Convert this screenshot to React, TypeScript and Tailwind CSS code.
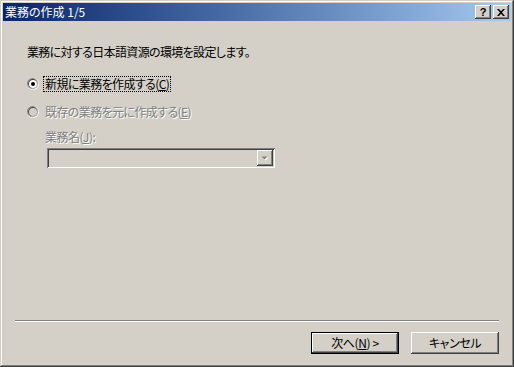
import React from "react";

const font = "font-['Noto_Sans_CJK_JP','Liberation_Sans',sans-serif] [font-feature-settings:'palt']";

function Radio({ checked, disabled }: { checked?: boolean; disabled?: boolean }) {
  return (
    <svg width="12" height="12" viewBox="0 0 12 12" className="shrink-0">
      <circle cx="6" cy="6" r="6" fill="#ffffff" />
      <circle cx="5.6" cy="5.6" r="5.6" fill="#808080" />
      <circle cx="6" cy="6" r="5" fill="#d4d0c8" />
      <circle cx="5.7" cy="5.7" r="4.6" fill="#404040" />
      <circle cx="6" cy="6" r="4" fill={disabled ? "#d4d0c8" : "#ffffff"} />
      {checked && <circle cx="6" cy="6" r="2" fill="#000000" />}
    </svg>
  );
}

function CaptionButton({ children }: { children: React.ReactNode }) {
  return (
    <div className="flex h-[14px] w-[16px] items-center justify-center bg-[#d4d0c8] shadow-[inset_-1px_-1px_#404040,inset_1px_1px_#ffffff,inset_-2px_-2px_#808080]">
      {children}
    </div>
  );
}

function Button({ children, isDefault }: { children: React.ReactNode; isDefault?: boolean }) {
  return (
    <div
      className={
        isDefault
          ? "flex h-[22px] w-[88px] items-center justify-center border border-black bg-[#d4d0c8] text-[12px] tracking-[-0.4px] text-black shadow-[inset_-1px_-1px_#404040,inset_1px_1px_#ffffff,inset_-2px_-2px_#808080]"
          : "flex h-[22px] w-[88px] items-center justify-center bg-[#d4d0c8] text-[12px] tracking-[-0.4px] text-black shadow-[inset_-1px_-1px_#404040,inset_1px_1px_#ffffff,inset_-2px_-2px_#808080]"
      }
    >
      {children}
    </div>
  );
}

export default function App() {
  return (
    <div
      className={`${font} flex h-[367px] w-[514px] flex-col bg-[#d4d0c8] p-[3px] shadow-[inset_-1px_-1px_#404040,inset_1px_1px_#d4d0c8,inset_-2px_-2px_#808080,inset_2px_2px_#ffffff]`}
    >
      {/* title bar */}
      <div className="flex h-[18px] items-center justify-between bg-gradient-to-r from-[#0a246a] to-[#a6caf0] pl-[2px] pr-[2px]">
        <span className="text-[12px] leading-[16px] text-white">業務の作成 1/5</span>
        <div className="flex gap-[2px]">
          <CaptionButton>
            <span className="font-['Liberation_Sans',sans-serif] text-[11px] font-bold leading-none text-black">?</span>
          </CaptionButton>
          <CaptionButton>
            <svg width="8" height="7" viewBox="0 0 8 7">
              <path d="M0 0h2l2 2.2L6 0h2L5 3.5 8 7H6L4 4.8 2 7H0l3-3.5z" fill="#000" />
            </svg>
          </CaptionButton>
        </div>
      </div>

      {/* content */}
      <div className="flex flex-1 flex-col">
        <p className="ml-[24px] mt-[23px] text-[12px] leading-[16px] tracking-[-0.65px] text-black">
          業務に対する日本語資源の環境を設定します。
        </p>

        <div className="ml-[24px] mt-[16px] flex h-[16px] items-center">
          <Radio checked />
          <span className="ml-[4px] border border-dotted border-black px-[1px] text-[12px] leading-[14px] tracking-[-0.6px] text-black">
            新規に業務を作成する(<span className="underline">C</span>)
          </span>
        </div>

        <div className="ml-[24px] mt-[12px] flex h-[16px] items-center">
          <Radio disabled />
          <span className="ml-[6px] text-[12px] leading-[14px] tracking-[-0.6px] text-[#808080] [text-shadow:1px_1px_#ffffff]">
            既存の業務を元に作成する(<span className="underline">E</span>)
          </span>
        </div>

        <p className="ml-[42px] mt-[9px] h-[16px] text-[12px] leading-[16px] tracking-[-0.5px] text-[#808080] [text-shadow:1px_1px_#ffffff]">
          業務名(<span className="underline">J</span>):
        </p>

        <div className="ml-[44px] mt-[3px] flex h-[20px] w-[228px] items-center justify-end bg-[#d4d0c8] pr-[2px] shadow-[inset_1px_1px_#808080,inset_-1px_-1px_#ffffff,inset_2px_2px_#404040,inset_-2px_-2px_#d4d0c8]">
          <div className="flex h-[16px] w-[16px] items-center justify-center bg-[#d4d0c8] shadow-[inset_-1px_-1px_#404040,inset_1px_1px_#ffffff,inset_-2px_-2px_#808080]">
            <svg width="8" height="5" viewBox="0 0 8 5">
              <path d="M1.5 1.5h6l-3 3z" fill="#ffffff" />
              <path d="M0.5 0.5h6l-3 3z" fill="#808080" />
            </svg>
          </div>
        </div>

        {/* separator + buttons */}
        <div className="mt-auto">
          <div className="mx-[12px] h-[2px] border-t border-b border-t-[#808080] border-b-[#ffffff]" />
          <div className="mb-[10px] mr-[12px] mt-[10px] flex justify-end gap-[12px]">
            <Button isDefault>
              次へ(<span className="underline">N</span>) &gt;
            </Button>
            <Button>キャンセル</Button>
          </div>
        </div>
      </div>
    </div>
  );
}
